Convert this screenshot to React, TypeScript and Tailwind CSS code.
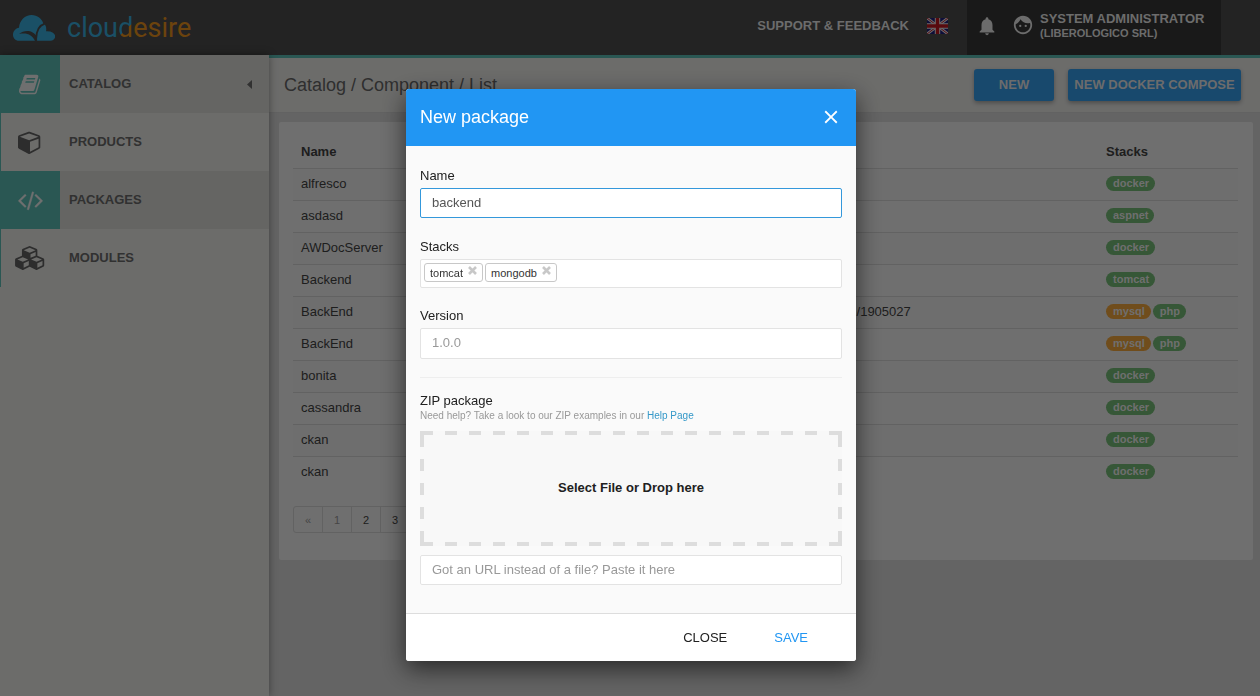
import { useState } from "react";
import type { ReactNode } from "react";
import { MdClose, MdFace, MdNotifications } from "react-icons/md";

type Stack = { name: string; tone: "green" | "orange" };
type Row = { name: string; url?: string; stacks: Stack[] };

const docker: Stack = { name: "docker", tone: "green" };
const mysql: Stack = { name: "mysql", tone: "orange" };
const php: Stack = { name: "php", tone: "green" };

const rows: Row[] = [
  { name: "alfresco", stacks: [docker] },
  { name: "asdasd", stacks: [{ name: "aspnet", tone: "green" }] },
  { name: "AWDocServer", stacks: [docker] },
  { name: "Backend", stacks: [{ name: "tomcat", tone: "green" }] },
  { name: "BackEnd", url: "/1905027", stacks: [mysql, php] },
  { name: "BackEnd", stacks: [mysql, php] },
  { name: "bonita", stacks: [docker] },
  { name: "cassandra", stacks: [docker] },
  { name: "ckan", stacks: [docker] },
  { name: "ckan", stacks: [docker] },
];

function BookIcon() {
  return (
    <svg viewBox="0 0 1792 1792" className="size-[23px]" fill="currentColor" aria-hidden="true">
      <path d="M1639 478q40 57 18 129l-275 906q-19 64-76.500 107.500t-122.500 43.500h-923q-77 0-148.500-53.500t-99.500-131.500q-24-67-2-127 0-4 3-27t4-37q1-8-3-21.500t-3-19.500q2-11 8-21t16.500-23.500 16.500-23.500q23-38 45-91.500t30-91.500q3-10 .5-30t-.5-28q3-11 17-28t17-23q21-36 42-92t25-90q1-9-2.500-32t.5-28q4-13 22-30.500t22-22.500q19-26 42.500-84.500t27.500-96.500q1-8-3-25.500t-2-26.500q2-8 9-18t18-23 17-21q8-12 16.500-30.500t15-35 16-36 19.500-32 26.500-23.500 36-11.500 47.500 5.500l-1 3q38-9 51-9h761q74 0 114 56t18 130l-274 906q-36 119-71.500 153.500t-128.500 34.500h-869q-27 0-38 15-11 16-1 43 24 70 144 70h923q29 0 56-15.500t35-41.500l300-987q7-22 5-57 38 15 59 43zm-1064 2q-4 13 2 22.500t20 9.500h608q13 0 25.500-9.500t16.500-22.500l21-64q4-13-2-22.500t-20-9.500h-608q-13 0-25.500 9.500t-16.500 22.500zm-83 256q-4 13 2 22.500t20 9.500h608q13 0 25.500-9.500t16.500-22.500l21-64q4-13-2-22.500t-20-9.500h-608q-13 0-25.500 9.500t-16.500 22.500z" />
    </svg>
  );
}

function CubeIcon() {
  return (
    <svg viewBox="0 0 1792 1792" className="size-6" fill="currentColor" aria-hidden="true">
      <path d="M896 1629l640-349v-636l-640 233v752zm-64-865l698-254-698-254-698 254zm832-252v768q0 35-18 65t-49 47l-704 384q-28 16-61 16t-61-16l-704-384q-31-17-49-47t-18-65v-768q0-40 23-73t61-47l704-256q22-8 44-8t44 8l704 256q38 14 61 47t23 73z" />
    </svg>
  );
}

function CodeIcon() {
  return (
    <svg viewBox="0 0 2048 1792" className="h-6 w-[27px]" fill="currentColor" aria-hidden="true">
      <path stroke="currentColor" strokeWidth="30" d="M681 1399l-50 50q-10 10-23 10t-23-10l-466-466q-10-10-10-23t10-23l466-466q10-10 23-10t23 10l50 50q10 10 10 23t-10 23l-393 393 393 393q10 10 10 23t-10 23zm591-1067l-373 1291q-4 13-15.500 19.500t-23.500 2.500l-62-17q-13-4-19.500-15.500t-2.500-24.500l373-1291q4-13 15.500-19.500t23.500-2.500l62 17q13 4 19.500 15.500t2.500 24.500zm657 651l-466 466q-10 10-23 10t-23-10l-50-50q-10-10-10-23t10-23l393-393-393-393q-10-10-10-23t10-23l50-50q10-10 23-10t23 10l466 466q10 10 10 23t-10 23z" />
    </svg>
  );
}

function CubesIcon() {
  return (
    <svg viewBox="0 0 2304 1792" className="h-6 w-[31px]" fill="currentColor" aria-hidden="true">
      <path d="M640 1632l384-192v-314l-384 164v342zm-64-454l404-173-404-173-404 173zm1088 454l384-192v-314l-384 164v342zm-64-454l404-173-404-173-404 173zm-448-293l384-165v-266l-384 164v267zm-64-379l441-189-441-189-441 189zm1088 518v416q0 36-19 67t-52 47l-448 224q-25 14-57 14t-57-14l-448-224q-4-2-7-4-2 2-7 4l-448 224q-25 14-57 14t-57-14l-448-224q-33-16-52-47t-19-67v-416q0-38 21.500-70t56.500-48l434-186v-400q0-38 21.500-70t56.500-48l448-192q23-10 50-10t50 10l448 192q35 16 56.500 48t21.500 70v400l434 186q36 16 57 48t21 70z" />
    </svg>
  );
}

function Logo() {
  return (
    <a href="#" className="flex items-center gap-3" aria-label="cloudesire">
      <svg viewBox="0 0 126 78" className="h-[26px] w-[42px]" aria-hidden="true">
        <path fill="#34a0cd" d="M18 77C7 77 0 69 0 59C0 48 8 40 18 38C20 16 36 0 56 0C73 0 87 11 91 26L100 77Z" />
        <path fill="#464646" d="M18 57C34 44 60 44 72 66L72 78H66C58 60 42 52 18 57Z" />
        <path fill="#34a0cd" stroke="#464646" strokeWidth="5" d="M70 80C68 52 74 32 97 25C101 32 103 39 102 46C117 46 129 53 129 64C129 73 121 80 112 80Z" />
      </svg>
      <span className="flex font-[Roboto,sans-serif] text-[27px] leading-8" aria-hidden="true">
        <span className="text-[#34a0cd]">clou</span>
        <span className="bg-[linear-gradient(135deg,#34a0cd_54%,#d8871a_54%)] bg-clip-text text-transparent">d</span>
        <span className="text-[#d8871a]">esire</span>
      </span>
    </a>
  );
}

function UkFlag() {
  return (
    <svg viewBox="0 0 21 16" className="h-4 w-[21px]" role="img" aria-label="English">
      <rect width="21" height="16" fill="#1c1c72" />
      <path d="M0 0L21 16M21 0L0 16" stroke="#d8d8d8" strokeWidth="2.800" />
      <path d="M0 0L21 16M21 0L0 16" stroke="#b01c2c" strokeWidth="1" />
      <path d="M10.500 0V16M0 8H21" stroke="#d8d8d8" strokeWidth="5.400" />
      <path d="M10.500 0V16M0 8H21" stroke="#b0141c" strokeWidth="3.400" />
    </svg>
  );
}

function Header() {
  return (
    <header className="flex h-[55px] items-stretch bg-[#464646] text-[#d8d8d8]">
      <div className="flex flex-1 items-center pl-[13px]">
        <Logo />
      </div>
      <div className="flex items-center gap-[18px] pr-[19px] pb-1">
        <a href="#" className="font-bold">SUPPORT &amp; FEEDBACK</a>
        <button type="button"><UkFlag /></button>
      </div>
      <div className="mr-[39px] flex items-start gap-[14px] bg-[#323232] pr-[13px] pl-[9px]">
        <button type="button" aria-label="Notifications" className="pt-[15px]">
          <MdNotifications className="size-[22px]" />
        </button>
        <button type="button" className="flex items-start gap-[6px] pt-[11px] text-left">
          <MdFace className="mt-[3px] size-[22px]" />
          <span className="block w-[168px] font-bold">
            <span className="block leading-[15px]">SYSTEM ADMINISTRATOR</span>
            <span className="block text-[11px] leading-[14px]">(LIBEROLOGICO SRL)</span>
          </span>
        </button>
      </div>
    </header>
  );
}

function NavItem({ icon, label, active, children }: { icon: ReactNode; label: string; active?: boolean; children?: ReactNode }) {
  return (
    <li>
      <a
        href="#"
        className={
          active
            ? "flex h-[58px] items-center border-l border-[#54aea6] bg-[#cacac6] pr-[17px]"
            : "flex h-[58px] items-center border-l border-[#54aea6] pr-[17px]"
        }
      >
        <span
          className={
            active
              ? "flex h-full w-[59px] items-center justify-center bg-[#54aea6] pr-px text-[#dedede]"
              : "flex h-full w-[59px] items-center justify-center pr-px text-[#5a5a5a]"
          }
        >
          {icon}
        </span>
        <span className="flex-1 pl-[9px] font-bold text-[#626262]">{label}</span>
        {children}
      </a>
    </li>
  );
}

function Sidebar() {
  return (
    <nav className="z-10 w-[269px] shrink-0 bg-[#d8d8d5] shadow-[0_0_8px_rgba(0,0,0,0.4)]">
      <ul>
        <NavItem icon={<BookIcon />} label="CATALOG" active>
          <svg viewBox="0 0 5 9" className="h-[9px] w-[5px]" fill="#626262" aria-hidden="true">
            <path d="M5 0V9L0 4.500Z" />
          </svg>
        </NavItem>
        <NavItem icon={<CubeIcon />} label="PRODUCTS" />
        <NavItem icon={<CodeIcon />} label="PACKAGES" active />
        <NavItem icon={<CubesIcon />} label="MODULES" />
      </ul>
    </nav>
  );
}

function Badge({ stack }: { stack: Stack }) {
  return (
    <span
      className={
        stack.tone === "green"
          ? "rounded-full bg-[#6cae6e] pr-[6px] pl-[7px] text-[11px] leading-[15px] font-bold text-[#dedede]"
          : "rounded-full bg-[#e09a38] pr-[6px] pl-[7px] text-[11px] leading-[15px] font-bold text-[#dedede]"
      }
    >
      {stack.name}
    </span>
  );
}

function PackageTable() {
  return (
    <table className="w-full table-fixed border-collapse text-left">
      <thead>
        <tr className="h-8">
          <th className="w-[59%] px-2">Name</th>
          <th className="px-[6px]" aria-label="URL" />
          <th className="w-[140px] px-2">Stacks</th>
        </tr>
      </thead>
      <tbody>
        {rows.map((row, i) => (
          <tr key={i} className="h-8 border-t border-[#c4c4c4] odd:bg-[#dcdcdc]">
            <td className="px-2">{row.name}</td>
            <td className="px-[6px]">{row.url}</td>
            <td className="px-2 pb-[2px]">
              <span className="flex gap-[2px]">
                {row.stacks.map((s) => (
                  <Badge key={s.name} stack={s} />
                ))}
              </span>
            </td>
          </tr>
        ))}
      </tbody>
    </table>
  );
}

function Pagination() {
  const pages = ["«", "1", "2", "3", "4", "5", "»"];
  return (
    <div className="flex text-[11px]">
      {pages.map((p, i) => (
        <button
          key={p}
          type="button"
          disabled={i < 2}
          className="-mr-px h-[27px] w-[30px] border border-[#c4c4c4] first:rounded-l-[3px] last:rounded-r-[3px] disabled:text-[#8c8c8c]"
        >
          {p}
        </button>
      ))}
    </div>
  );
}

function Page() {
  return (
    <div className="flex min-h-screen flex-col bg-[#c8c8c8] text-[#3c3c3c]">
      <Header />
      <div className="flex flex-1">
        <Sidebar />
        <main className="flex-1 border-t-[3px] border-[#54aea6]">
          <div className="flex h-[55px] items-center justify-between border-b border-[#c4c4c4] bg-[#d8d8d5] pr-[19px] pl-[15px]">
            <h1 className="text-lg text-[#5e5e5e]">Catalog / Component / List</h1>
            <div className="flex gap-[14px] font-bold text-[#d8d8d8]">
              <button type="button" className="h-8 w-20 rounded-[3px] bg-[#3192da] shadow-[0_2px_4px_rgba(0,0,0,0.3)]">
                NEW
              </button>
              <button type="button" className="h-8 w-[173px] rounded-[3px] bg-[#3192da] whitespace-nowrap shadow-[0_2px_4px_rgba(0,0,0,0.3)]">
                NEW DOCKER COMPOSE
              </button>
            </div>
          </div>
          <section className="mt-[9px] mr-[7px] ml-[10px] rounded-[2px] bg-[#dedede] pt-[14px] pr-[15px] pb-[27px] pl-[14px]">
            <PackageTable />
            <div className="pt-[18px]">
              <Pagination />
            </div>
          </section>
        </main>
      </div>
    </div>
  );
}

const field =
  "block w-full rounded-[2px] border border-[#e3e3e3] bg-white px-[11px] pb-[2px] text-[#555555] outline-none placeholder:text-[#999999] focus:border-[#3498db]";

function Tag({ label, onRemove }: { label: string; onRemove: () => void }) {
  return (
    <span className="flex h-[19px] items-center gap-[5px] rounded-[3px] border border-[#c8c8c8] bg-white px-[5px] text-[11px] text-[#333333]">
      {label}
      <button type="button" aria-label={`Remove ${label}`} className="pb-1" onClick={onRemove}>
        <svg viewBox="0 0 9 9" className="size-[9px]" stroke="#c8c8c8" strokeWidth="2.600" aria-hidden="true">
          <path d="M1 1L8 8M8 1L1 8" />
        </svg>
      </button>
    </span>
  );
}

function DropZone() {
  return (
    <label className="relative mt-[10px] flex h-[115px] cursor-pointer items-center justify-center bg-[#f8f8f8] pb-[2px] font-bold">
      <svg className="absolute inset-0 size-full" stroke="#dddddd" strokeWidth="8" aria-hidden="true">
        <line x1="0" y1="0" x2="100%" y2="0" strokeDasharray="12 12" strokeDashoffset="-1" />
        <line x1="0" y1="100%" x2="100%" y2="100%" strokeDasharray="12 12" strokeDashoffset="-1" />
        <line x1="0" y1="0" x2="0" y2="100%" strokeDasharray="16 12 12 12 12 12 12 12 16 12" />
        <line x1="100%" y1="0" x2="100%" y2="100%" strokeDasharray="16 12 12 12 12 12 12 12 16 12" />
      </svg>
      <input type="file" className="sr-only" />
      Select File or Drop here
    </label>
  );
}

function PackageDialog() {
  const [name, setName] = useState("backend");
  const [stacks, setStacks] = useState(["tomcat", "mongodb"]);
  return (
    <div className="fixed inset-0 z-20 flex items-start justify-center overflow-auto bg-black/50 pt-[89px] pl-[2px]">
      <form
        role="dialog"
        aria-labelledby="dialog-title"
        className="w-[450px] overflow-hidden rounded-[3px] bg-[#fafafa] text-[#212121] shadow-[0_8px_24px_rgba(0,0,0,0.6)]"
        onSubmit={(e) => e.preventDefault()}
      >
        <div className="flex h-[57px] items-center justify-between bg-[#2196f3] pr-[14px] pb-[2px] pl-[14px] text-white">
          <h2 id="dialog-title" className="text-lg">New package</h2>
          <button type="button" aria-label="Close dialog">
            <MdClose className="size-[22px]" />
          </button>
        </div>
        <div className="px-[14px] pt-5 pb-7">
          <label htmlFor="name" className="mb-[2px] block leading-5">Name</label>
          <input id="name" className={field + " h-[30px]"} autoFocus value={name} onChange={(e) => setName(e.target.value)} />

          <label htmlFor="stacks" className="mt-[19px] mb-[2px] block leading-5">Stacks</label>
          <div className="flex h-[29px] items-center gap-[2px] rounded-[2px] border border-[#e3e3e3] bg-white px-[3px] pb-[2px]">
            {stacks.map((s) => (
              <Tag key={s} label={s} onRemove={() => setStacks(stacks.filter((x) => x !== s))} />
            ))}
            <input id="stacks" className="min-w-0 flex-1 outline-none" />
          </div>

          <label htmlFor="version" className="mt-[18px] mb-[2px] block leading-5">Version</label>
          <input id="version" className={field + " h-[31px]"} placeholder="1.0.0" />

          <hr className="mt-[18px] mb-[14px] border-[#eeeeee]" />

          <h3 className="leading-[18px]">ZIP package</h3>
          <p className="text-[10px] leading-[11px] text-[#999999]">
            Need help? Take a look to our ZIP examples in our{" "}
            <a href="#" className="text-[#3498c8]">Help Page</a>
          </p>
          <DropZone />
          <input aria-label="Package URL" className={field + " mt-[9px] h-[30px]"} placeholder="Got an URL instead of a file? Paste it here" />
        </div>
        <div className="flex h-12 items-center justify-end gap-[47px] border-t border-[#dddddd] bg-white pr-12">
          <button type="button">CLOSE</button>
          <button type="submit" className="text-[#2196f3]">SAVE</button>
        </div>
      </form>
    </div>
  );
}

export default function App() {
  return (
    <div className="font-['Liberation_Sans',Arial,sans-serif] text-[13px] leading-5">
      <Page />
      <PackageDialog />
    </div>
  );
}
